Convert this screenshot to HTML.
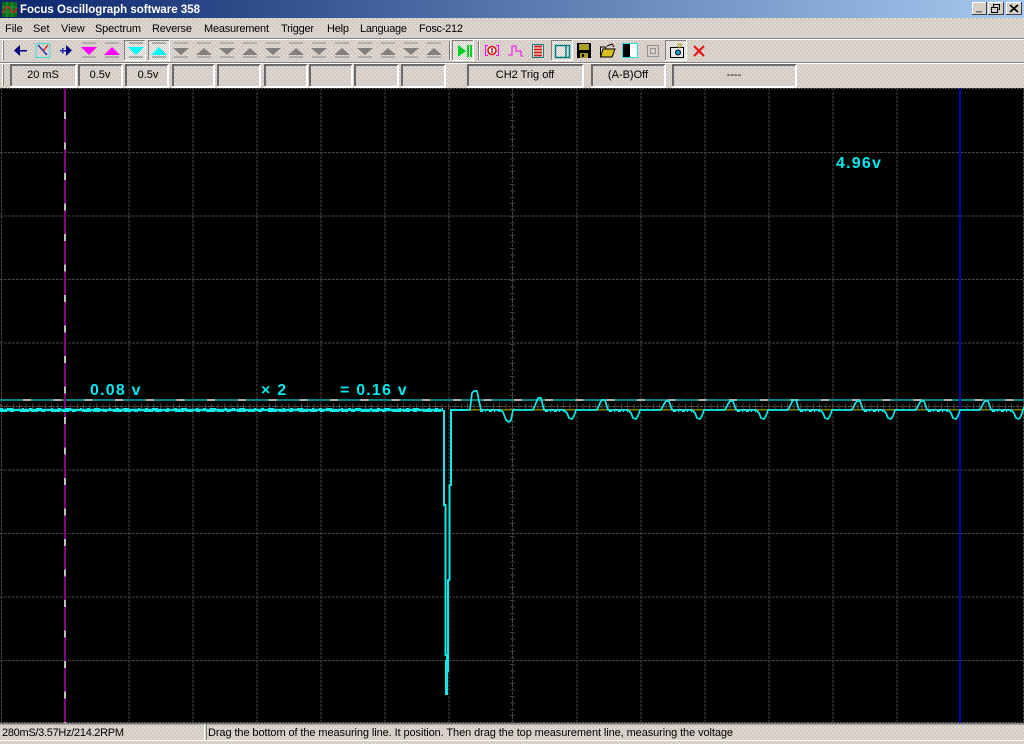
<!DOCTYPE html>
<html>
<head>
<meta charset="utf-8">
<title>Focus Oscillograph software 358</title>
<style>
html,body{margin:0;padding:0;background:#d8d0c8;overflow:hidden}
svg{display:block}
text{font-family:"Liberation Sans",sans-serif}
.m{font-size:11px;fill:#000}
.c{font-size:11px;fill:#000;text-anchor:middle}
.v{font-size:16px;font-weight:bold;fill:#00e8f0;letter-spacing:1.2px}
</style>
</head>
<body>
<svg width="1024" height="744" viewBox="0 0 1024 744" xmlns="http://www.w3.org/2000/svg">
<defs>
<pattern id="d" width="4" height="4" patternUnits="userSpaceOnUse">
<rect width="4" height="4" fill="#d6cdc8"/>
<rect x="1" y="1" width="1" height="1" fill="#eeeed4"/>
<rect x="3" y="3" width="1" height="1" fill="#eeeed4"/>
<rect x="3" y="1" width="1" height="1" fill="#cfc8c8"/>
<rect x="1" y="3" width="1" height="1" fill="#cfc8c8"/>
</pattern>
<pattern id="chk" width="2" height="2" patternUnits="userSpaceOnUse">
<rect width="2" height="2" fill="#f4f4f0"/>
<rect width="1" height="1" fill="#cfcbc4"/>
<rect x="1" y="1" width="1" height="1" fill="#cfcbc4"/>
</pattern>
<linearGradient id="tb" x1="0" x2="1" y1="0" y2="0">
<stop offset="0" stop-color="#0a246a"/>
<stop offset="1" stop-color="#a6caf0"/>
</linearGradient>
<g id="dn">
<path d="M-7 -9H7M-7 5H7" stroke="#8a8a8a" stroke-width="1" fill="none"/>
<path d="M-8 -4H8L0 3Z" fill="#808080"/>
</g>
<g id="up">
<path d="M-7 -9H7M-7 5H7" stroke="#8a8a8a" stroke-width="1" fill="none"/>
<path d="M-8 3H8L0 -4Z" fill="#808080"/>
</g>
</defs>

<!-- chrome background -->
<rect width="1024" height="744" fill="url(#d)"/>

<!-- title bar -->
<rect width="1024" height="18" fill="url(#tb)"/>
<rect x="2" y="2" width="15" height="15" fill="#0a6a1a"/>
<path d="M2 7H17M2 12H17M7 2V17M12 2V17" stroke="#20a030" stroke-width="1"/>
<path d="M3 13L6 7L9 7L12 12L15 12L17 8" stroke="#e02020" stroke-width="1.3" fill="none"/>
<text x="20" y="13" font-size="11.5" font-weight="bold" fill="#fff" textLength="180">Focus Oscillograph software 358</text>

<g shape-rendering="crispEdges">
<rect x="972" y="2" width="15" height="13" fill="#d4d0c8"/>
<path d="M972 2.5H987M972.5 2V15" stroke="#fff"/><path d="M972 14.5H987M986.5 2V15" stroke="#404040"/>
<rect x="976" y="11" width="6" height="1.5" fill="#777"/>
<rect x="988" y="2" width="16" height="13" fill="#d4d0c8"/>
<path d="M988 2.5H1004M988.5 2V15" stroke="#fff"/><path d="M988 14.5H1004M1003.5 2V15" stroke="#404040"/>
<rect x="993.5" y="4.5" width="6" height="5" fill="none" stroke="#000"/>
<rect x="991.5" y="7.5" width="6" height="5" fill="#d4d0c8" stroke="#000"/>
<rect x="1006" y="2" width="16" height="13" fill="#d4d0c8"/>
<path d="M1006 2.5H1022M1006.5 2V15" stroke="#fff"/><path d="M1006 14.5H1022M1021.5 2V15" stroke="#404040"/>
</g>
<path d="M1010 5L1018 12M1018 5L1010 12" stroke="#000" stroke-width="1.6"/>

<!-- menu -->
<text class="m" x="5" y="32">File</text>
<text class="m" x="33" y="32">Set</text>
<text class="m" x="61" y="32">View</text>
<text class="m" x="95" y="32" textLength="46">Spectrum</text>
<text class="m" x="152" y="32" textLength="40">Reverse</text>
<text class="m" x="204" y="32" textLength="65">Measurement</text>
<text class="m" x="281" y="32" textLength="33">Trigger</text>
<text class="m" x="327" y="32" textLength="22">Help</text>
<text class="m" x="360" y="32" textLength="47">Language</text>
<text class="m" x="419" y="32" textLength="44">Fosc-212</text>

<!-- toolbars dividers -->
<g shape-rendering="crispEdges">
<rect y="38" width="1024" height="1" fill="#808080"/><rect y="39" width="1024" height="1" fill="#fff"/>
<rect y="62" width="1024" height="1" fill="#808080"/><rect y="63" width="1024" height="1" fill="#fff"/>
<rect x="2" y="41" width="1" height="19" fill="#fff"/><rect x="3" y="41" width="1" height="19" fill="#808080"/>
<rect x="2" y="65" width="1" height="21" fill="#fff"/><rect x="3" y="65" width="1" height="21" fill="#808080"/>
</g>

<!-- toolbar icons -->
<path d="M14 50.5L20 45V56Z" fill="#000080"/><rect x="20" y="50" width="7" height="1.5" fill="#000080"/>
<rect x="36" y="43.5" width="14" height="14" fill="none" stroke="#40e0e0" stroke-width="1"/>
<path d="M38 45L47 55" stroke="#2030c0" stroke-width="1.4"/><path d="M48 45L43 51" stroke="#e02020" stroke-width="1.4"/>
<path d="M72 50.5L66 45V56Z" fill="#000080"/><rect x="60" y="50" width="6" height="1.5" fill="#2020c0"/><rect x="62" y="48" width="1.5" height="5.5" fill="#2020c0"/>

<g transform="translate(89,52)"><path d="M-7 -9H7M-7 5H7" stroke="#8a8a8a" fill="none"/><path d="M-8 -5H8L0 3Z" fill="#ff00ff"/></g>
<g transform="translate(112,52)"><path d="M-7 -9H7M-7 5H7" stroke="#8a8a8a" fill="none"/><path d="M-8 3H8L0 -5Z" fill="#ff00ff"/></g>

<rect x="124" y="40" width="22" height="21" fill="url(#chk)"/>
<rect x="148" y="40" width="22" height="21" fill="url(#chk)"/>
<g shape-rendering="crispEdges">
<path d="M124 40.5H146M124.5 40V61M148 40.5H170M148.5 40V61" stroke="#808080"/>
<path d="M124 60.5H146M145.5 40V61M148 60.5H170M169.5 40V61" stroke="#fff"/>
</g>
<g transform="translate(136,52)"><path d="M-7 -9H7M-7 5H7" stroke="#777" fill="none"/><path d="M-8 -5H8L0 3Z" fill="#00ffff"/></g>
<g transform="translate(159,52)"><path d="M-7 -9H7M-7 5H7" stroke="#777" fill="none"/><path d="M-8 3H8L0 -5Z" fill="#00ffff"/></g>

<use href="#dn" x="181" y="52"/><use href="#up" x="204" y="52"/>
<use href="#dn" x="227" y="52"/><use href="#up" x="250" y="52"/>
<use href="#dn" x="273" y="52"/><use href="#up" x="296" y="52"/>
<use href="#dn" x="319" y="52"/><use href="#up" x="342" y="52"/>
<use href="#dn" x="365" y="52"/><use href="#up" x="388" y="52"/>
<use href="#dn" x="411" y="52"/><use href="#up" x="434" y="52"/>

<g shape-rendering="crispEdges">
<rect x="449" y="41" width="1" height="19" fill="#808080"/><rect x="450" y="41" width="1" height="19" fill="#fff"/>
<rect x="452" y="40" width="22" height="21" fill="url(#chk)"/>
<path d="M452 40.5H474M452.5 40V61" stroke="#808080"/><path d="M452 60.5H474M473.5 40V61" stroke="#fff"/>
<rect x="478" y="41" width="1" height="19" fill="#808080"/><rect x="479" y="41" width="1" height="19" fill="#fff"/>
</g>
<path d="M458 45L466 51L458 57Z" fill="#00d020"/><rect x="467" y="45" width="2" height="12" fill="#00d020"/><rect x="470" y="45" width="2" height="12" fill="#00d020"/>

<!-- [0] -->
<path d="M488 45.5H485.500V55.500H488M496 45.500H498.500V55.500H496" stroke="#ff00ff" stroke-width="1.200" fill="none" shape-rendering="crispEdges"/>
<circle cx="492" cy="50.500" r="4" fill="#fff" stroke="#e01010" stroke-width="1.500"/><rect x="491.300" y="48" width="1.500" height="5" fill="#e01010"/>
<!-- pulses -->
<path d="M508 55H512V46H516V51H521V56H523" stroke="#ff00ff" stroke-width="1.300" fill="none" shape-rendering="crispEdges"/>
<!-- list -->
<rect x="532.500" y="44.500" width="11" height="13" fill="#e8e4d8" stroke="#008080"/>
<path d="M534 46.500H542M534 49.500H542M534 52.500H542M534 55.500H542" stroke="#e01010" stroke-width="1.800"/>
<!-- pressed box -->
<rect x="551" y="40" width="22" height="21" fill="url(#chk)"/>
<path d="M551 40.500H573M551.500 40V61" stroke="#808080" shape-rendering="crispEdges"/><path d="M551 60.500H573M572.500 40V61" stroke="#fff" shape-rendering="crispEdges"/>
<rect x="555.500" y="45.500" width="14" height="12" fill="none" stroke="#008080" stroke-width="1.500"/>
<path d="M566 45V58" stroke="#008080" stroke-width="1.500"/>
<!-- floppy -->
<rect x="577" y="43" width="14" height="15" fill="#000"/>
<rect x="579" y="44" width="10" height="6" fill="#a8a020"/>
<rect x="580" y="53" width="8" height="5" fill="#a8a020"/><rect x="582" y="54" width="2" height="3" fill="#000"/>
<!-- folder -->
<path d="M600.500 57L603 49H615L612 57Z" fill="#d8c020" stroke="#000"/>
<path d="M600.500 57V47H606V49" fill="none" stroke="#000"/>
<path d="M607 46L612 44L614 47" stroke="#000" fill="none"/>
<!-- black/white -->
<rect x="622.500" y="43.500" width="15" height="14" fill="#fff" stroke="#20e0e8"/>
<rect x="623" y="44" width="7" height="13" fill="#000"/>
<!-- small box -->
<rect x="647.500" y="45.500" width="11" height="11" fill="#d8d0c8" stroke="#909090"/>
<rect x="650.500" y="48.500" width="5" height="5" fill="none" stroke="#909090"/>
<!-- camera pressed -->
<rect x="665" y="40" width="22" height="21" fill="url(#chk)"/>
<path d="M665 40.500H687M665.500 40V61" stroke="#808080" shape-rendering="crispEdges"/><path d="M665 60.500H687M686.500 40V61" stroke="#fff" shape-rendering="crispEdges"/>
<rect x="670.500" y="47.500" width="13" height="10" fill="#e8e8e8" stroke="#000"/>
<circle cx="678" cy="52.500" r="2.500" fill="#10a0d0" stroke="#000"/>
<rect x="678" y="44" width="3" height="3" fill="none" stroke="#b0a020"/>
<!-- X -->
<path d="M694 46L704 56M704 46L694 56" stroke="#f01010" stroke-width="2"/>

<!-- status fields -->
<g shape-rendering="crispEdges" fill="none">
<path d="M10 65H76M11 65V86M78 65H122M79 65V86M125 65H168M126 65V86M172 65H214M173 65V86M217 65H260M218 65V86M264 65H307M265 65V86M309 65H352M310 65V86M354 65H398M355 65V86M401 65H445M402 65V86M467 65H583M468 65V86M591 65H665M592 65V86M672 65H796M673 65V86" stroke="#6a6a6a" stroke-width="2"/>
<path d="M10 87H77M76 65V88M78 87H123M122 65V88M125 87H169M168 65V88M172 87H215M214 65V88M217 87H261M260 65V88M264 87H308M307 65V88M309 87H353M352 65V88M354 87H399M398 65V88M401 87H446M445 65V88M467 87H584M583 65V88M591 87H666M665 65V88M672 87H797M796 65V88" stroke="#fff" stroke-width="2"/>
</g>
<text class="c" x="43" y="78">20 mS</text>
<text class="c" x="100" y="78">0.5v</text>
<text class="c" x="148" y="78">0.5v</text>
<text class="c" x="525" y="78">CH2 Trig off</text>
<text class="c" x="628" y="78">(A-B)Off</text>
<text class="c" x="734" y="78">----</text>

<!-- scope -->
<rect x="0" y="88" width="1024" height="635" fill="#000"/>
<g shape-rendering="crispEdges" fill="none">
<path d="M0 88.500H1024" stroke="#555" stroke-dasharray="2 1"/>
<path d="M0 722.500H1024" stroke="#555" stroke-dasharray="2 1"/>
<!-- vertical grid -->
<path d="M1.500 88V723M129 88V723M193 88V723M257 88V723M321 88V723M385 88V723M449 88V723M577 88V723M641 88V723M705 88V723M769 88V723M833 88V723M897 88V723M1023.500 88V723" stroke="#444" stroke-dasharray="3 1"/>
<!-- horizontal grid -->
<path d="M0 152.500H1024M0 216H1024M0 279.500H1024M0 343H1024M0 470H1024M0 533.500H1024M0 597H1024M0 660.500H1024" stroke="#444" stroke-dasharray="3 1"/>
<!-- centre axes with ticks -->
<path d="M512.500 88V723" stroke="#444" stroke-width="1" stroke-dasharray="3 1"/>
<path d="M512.500 88V723" stroke="#3c3c3c" stroke-width="5" stroke-dasharray="1 5.400"/>
<path d="M0 406.500H1024" stroke="#505050" stroke-width="1" stroke-dasharray="3 1"/>
<path d="M0 406.500H1024" stroke="#444" stroke-width="6" stroke-dasharray="1 5.400"/>
<!-- reference dashed teal line -->
<path d="M0 400H1024" stroke="#008888" stroke-width="2"/>
<path d="M23 400H1024" stroke="#b0b0b0" stroke-width="2" stroke-dasharray="8 22.700"/>
<!-- olive line -->
<path d="M450 409.500H1024" stroke="#808000" stroke-width="1.500"/>
<!-- purple cursor -->
<path d="M65 88V723" stroke="#800080" stroke-width="2"/>
<path d="M65 112V723" stroke="#c0c0c0" stroke-width="2" stroke-dasharray="7 23.500"/>
<!-- blue cursor -->
<path d="M960 88V723" stroke="#0000a8" stroke-width="2"/>
</g>

<!-- trace -->
<g fill="none" stroke="#10e8e8" stroke-linejoin="round">
<path d="M0 410H443" stroke-width="2.600"/>
<path d="M0 408.500H443" stroke-width="1" stroke-dasharray="3 4 6 9 2 5"/>
<path d="M0 411.500H443" stroke-width="1" stroke-dasharray="7 3 4 6 9 2"/>
<g shape-rendering="crispEdges">
<path d="M444 410V505H445.500V655H447V695" stroke-width="2"/>
<path d="M446.500 660V695" stroke-width="3"/>
<path d="M448 672V660H448V580H449.500V485H451V410H466" stroke-width="2"/>
</g>
<path stroke-width="1.700" d="M466 410L470 410L472 393L474 391L477 391L479 401L481 410L500 410L503 412L506 420L509 422L511 420L513 410
L533 410L536 403L538 398L541 398L544 410L564 410L567 413L569 418L572 419L574 416L576 410
L597 410L600 403L602 400L605 400L608 410L628 410L631 413L633 418L636 419L638 416L640 410
L661 410L664 404L666 401L669 401L672 410L692 410L695 413L697 418L700 419L702 416L704 410
L725 410L728 404L730 401L733 401L736 410L756 410L759 413L761 418L764 419L766 416L768 410
L788 410L791 404L793 400L796 400L799 410L820 410L823 413L825 418L828 419L830 416L832 410
L852 410L855 404L857 401L860 401L863 410L883 410L886 413L888 418L891 419L893 416L895 410
L916 410L919 404L921 401L924 401L927 410L948 410L951 413L953 418L956 419L958 416L960 410
L980 410L983 404L985 401L988 401L991 410L1011 410L1014 413L1016 418L1019 419L1021 416L1024 407"/>
<path d="M480 411H500M545 411H565M609 411H628M673 411H692M737 411H756M800 411H820M864 411H883M928 411H948M992 411H1011" stroke-width="1.500" stroke-dasharray="3 2 1 3" shape-rendering="crispEdges"/>
</g>

<!-- measurements -->
<text class="v" x="90" y="395">0.08 v</text>
<text class="v" x="261" y="395">× 2</text>
<text class="v" x="340" y="395">= 0.16 v</text>
<text class="v" x="836" y="168">4.96v</text>

<!-- status bar -->
<g shape-rendering="crispEdges">
<rect x="0" y="723" width="1024" height="1" fill="#808080"/>
<rect x="0" y="724" width="1024" height="1" fill="#a0a0a0"/>
<rect x="204" y="724" width="1" height="16" fill="#fff"/>
<rect x="206" y="724" width="1" height="16" fill="#808080"/>
<rect x="0" y="740" width="1024" height="1" fill="#fff"/>
</g>
<text class="m" x="2" y="736" textLength="122">280mS/3.57Hz/214.2RPM</text>
<text class="m" x="208" y="736" textLength="525">Drag the bottom of the measuring line. It position. Then drag the top measurement line, measuring the voltage</text>
</svg>
</body>
</html>
